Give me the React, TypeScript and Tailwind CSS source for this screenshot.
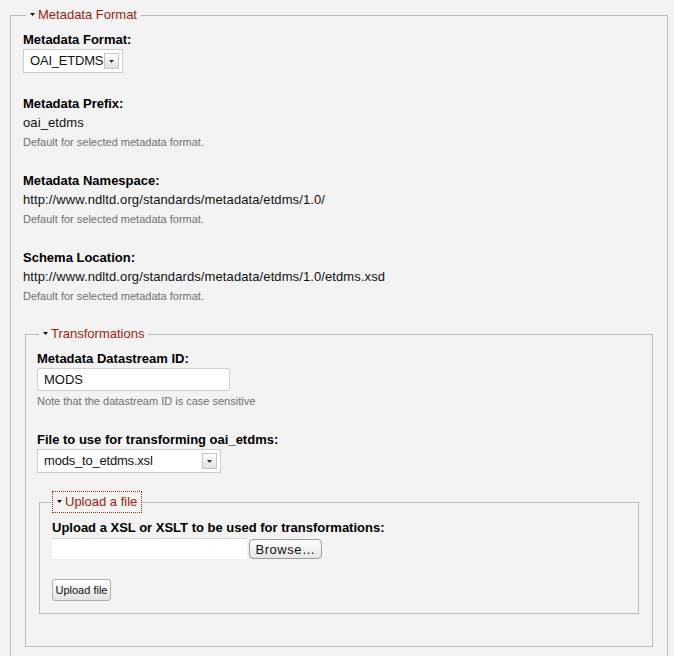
import React from "react";

const font = "font-['Liberation_Sans','Helvetica','Arial',sans-serif]";

function Caret() {
  return (
    <svg width="5" height="3" viewBox="0 0 5 3" className="mb-[2px] mr-[3px] inline-block">
      <path d="M0 0 L5 0 L2.5 3 Z" fill="#111" />
    </svg>
  );
}

function SmallArrow() {
  return (
    <svg width="5" height="3" viewBox="0 0 5 3">
      <path d="M0 0 L5 0 L2.5 3 Z" fill="#333" />
    </svg>
  );
}

function Select({ value, width }: { value: string; width: string }) {
  return (
    <div className={`flex h-[24px] items-center border border-[#cdcdcd] bg-white pl-[6px] pr-[3px] ${width}`}>
      <span className="flex-1 text-[13px] tracking-[-0.2px] text-[#111]">{value}</span>
      <span className="flex h-[16px] w-[15px] items-center justify-center border border-[#c4c4c4] bg-gradient-to-b from-white to-[#e2e2e2]">
        <SmallArrow />
      </span>
    </div>
  );
}

function Field({ label, value }: { label: string; value: string }) {
  return (
    <div className="mt-[22px]">
      <div className="text-[13px] font-bold leading-[18px] text-black">{label}</div>
      <div className="text-[13px] leading-[20px] tracking-[0.1px] text-[#111]">{value}</div>
      <div className="mt-[1px] text-[11px] leading-[16px] text-[#707070]">Default for selected metadata format.</div>
    </div>
  );
}

export default function App() {
  return (
    <div className={`min-h-[656px] bg-[#f3f3f3] pt-[7px] ${font}`}>
      <fieldset className="ml-[10px] w-[658px] border border-[#bbbbbb] px-[12px] pt-[8px] pb-[30px]">
        <legend className="ml-[3px] px-[4px] text-[13px] leading-[16px] text-[#9c1f10]">
          <Caret />Metadata Format
        </legend>

        <div className="text-[13px] font-bold leading-[18px] text-black">Metadata Format:</div>
        <Select value="OAI_ETDMS" width="w-[100px]" />

        <Field label="Metadata Prefix:" value="oai_etdms" />
        <Field label="Metadata Namespace:" value="http://www.ndltd.org/standards/metadata/etdms/1.0/" />
        <Field label="Schema Location:" value="http://www.ndltd.org/standards/metadata/etdms/1.0/etdms.xsd" />

        {/* Transformations */}
        <fieldset className="mx-[2px] mt-[22px] border border-[#bbbbbb] px-[11px] pt-[8px] pb-[32px]">
          <legend className="ml-[2px] px-[4px] text-[13px] leading-[16px] text-[#9c1f10]">
            <Caret />Transformations
          </legend>

          <div className="text-[13px] font-bold leading-[18px] text-black">Metadata Datastream ID:</div>
          <div className="flex h-[23px] w-[193px] items-center rounded-[2px] border border-[#cfcfcf] bg-white px-[6px] text-[13px] text-[#111]">
            MODS
          </div>
          <div className="mt-[2px] text-[11px] leading-[16px] text-[#707070]">Note that the datastream ID is case sensitive</div>

          <div className="mt-[22px] text-[13px] font-bold leading-[18px] text-black">File to use for transforming oai_etdms:</div>
          <Select value="mods_to_etdms.xsl" width="w-[184px]" />

          {/* Upload a file */}
          <fieldset className="mx-[2px] mt-[18px] border border-[#bbbbbb] px-[12px] pt-[6px] pb-[12px]">
            <legend className="border border-dotted border-[#b02a10] px-[4px] py-[2px] text-[13px] leading-[16px] text-[#9c1f10]">
              <Caret />Upload a file
            </legend>

            <div className="text-[13px] font-bold leading-[18px] text-black">Upload a XSL or XSLT to be used for transformations:</div>
            <div className="mt-[1px] flex items-center gap-[2px]">
              <div className="h-[21px] w-[195px] border-t border-[#d6d6d6] bg-white" />
              <button className="h-[20px] w-[73px] rounded-[4px] border border-[#9c9c9c] bg-gradient-to-b from-white to-[#e6e6e6] text-[13px] tracking-[0.5px] text-[#111]">
                Browse…
              </button>
            </div>

            <button className="mt-[20px] h-[22px] w-[59px] rounded-[3px] border border-[#b0b0b0] bg-gradient-to-b from-white to-[#e4e4e4] text-[11px] text-[#111]">
              Upload file
            </button>
          </fieldset>
        </fieldset>
      </fieldset>
    </div>
  );
}
